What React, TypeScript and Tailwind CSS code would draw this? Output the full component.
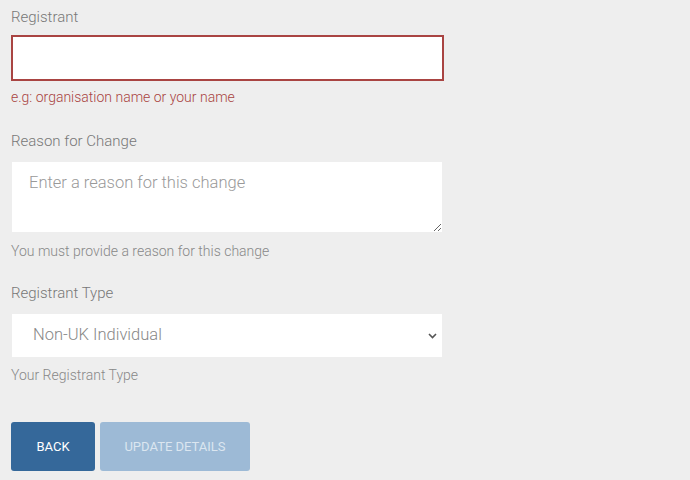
import React from "react";

export default function App() {
  const font = { fontFamily: "Roboto, 'Liberation Sans', sans-serif" };
  return (
    <div className="min-h-[480px] w-[690px] bg-[#eeeeee] pl-[11px] pt-[6px]" style={font}>
      <div className="w-[433px]">
        <label className="block text-[15px] font-light leading-[22px] text-[#777777]">Registrant</label>
        <input
          className="mt-[7px] block h-[46px] w-[433px] border-2 border-[#a94442] bg-white px-3 outline-none"
        />
        <p className="mt-[6px] text-[14px] font-light leading-[20px] text-[#a94442]">e.g: organisation name or your name</p>

        <label className="mt-[23px] block text-[15px] font-light leading-[22px] text-[#777777]">Reason for Change</label>
        <textarea
          placeholder="Enter a reason for this change"
          className="mt-[9px] block h-[72px] w-[432px] border border-[#eeeeee] bg-white px-[17px] py-[9px] text-[16.5px] font-light text-[#555555] outline-none placeholder:text-[#999999]"
        />
        <p className="mt-[8px] text-[14px] font-light leading-[20px] text-[#888888]">You must provide a reason for this change</p>

        <label className="mt-[21px] block text-[15px] font-light leading-[22px] text-[#777777]">Registrant Type</label>
        <div className="relative mt-[9px] h-[45px] w-[432px] border border-[#eeeeee] bg-white">
          <div className="flex h-full items-center pl-[21px] text-[16.5px] font-light text-[#888888]">Non-UK Individual</div>
          <svg className="absolute right-[5px] top-[19px]" width="9" height="6" viewBox="0 0 9 6">
            <path d="M1 1 L4.5 4.5 L8 1" stroke="#555" strokeWidth="1.6" fill="none" />
          </svg>
        </div>
        <p className="mt-[7px] text-[14px] font-light leading-[20px] text-[#888888]">Your Registrant Type</p>

        <div className="mt-[37px] flex gap-[5px]">
          <button className="h-[49px] w-[84px] rounded-[3px] bg-[#35689a] text-[13px] text-white">BACK</button>
          <button className="h-[49px] w-[150px] rounded-[3px] bg-[#9dbad6] text-[13px] text-[#dbe6f0]">UPDATE DETAILS</button>
        </div>
      </div>
    </div>
  );
}
